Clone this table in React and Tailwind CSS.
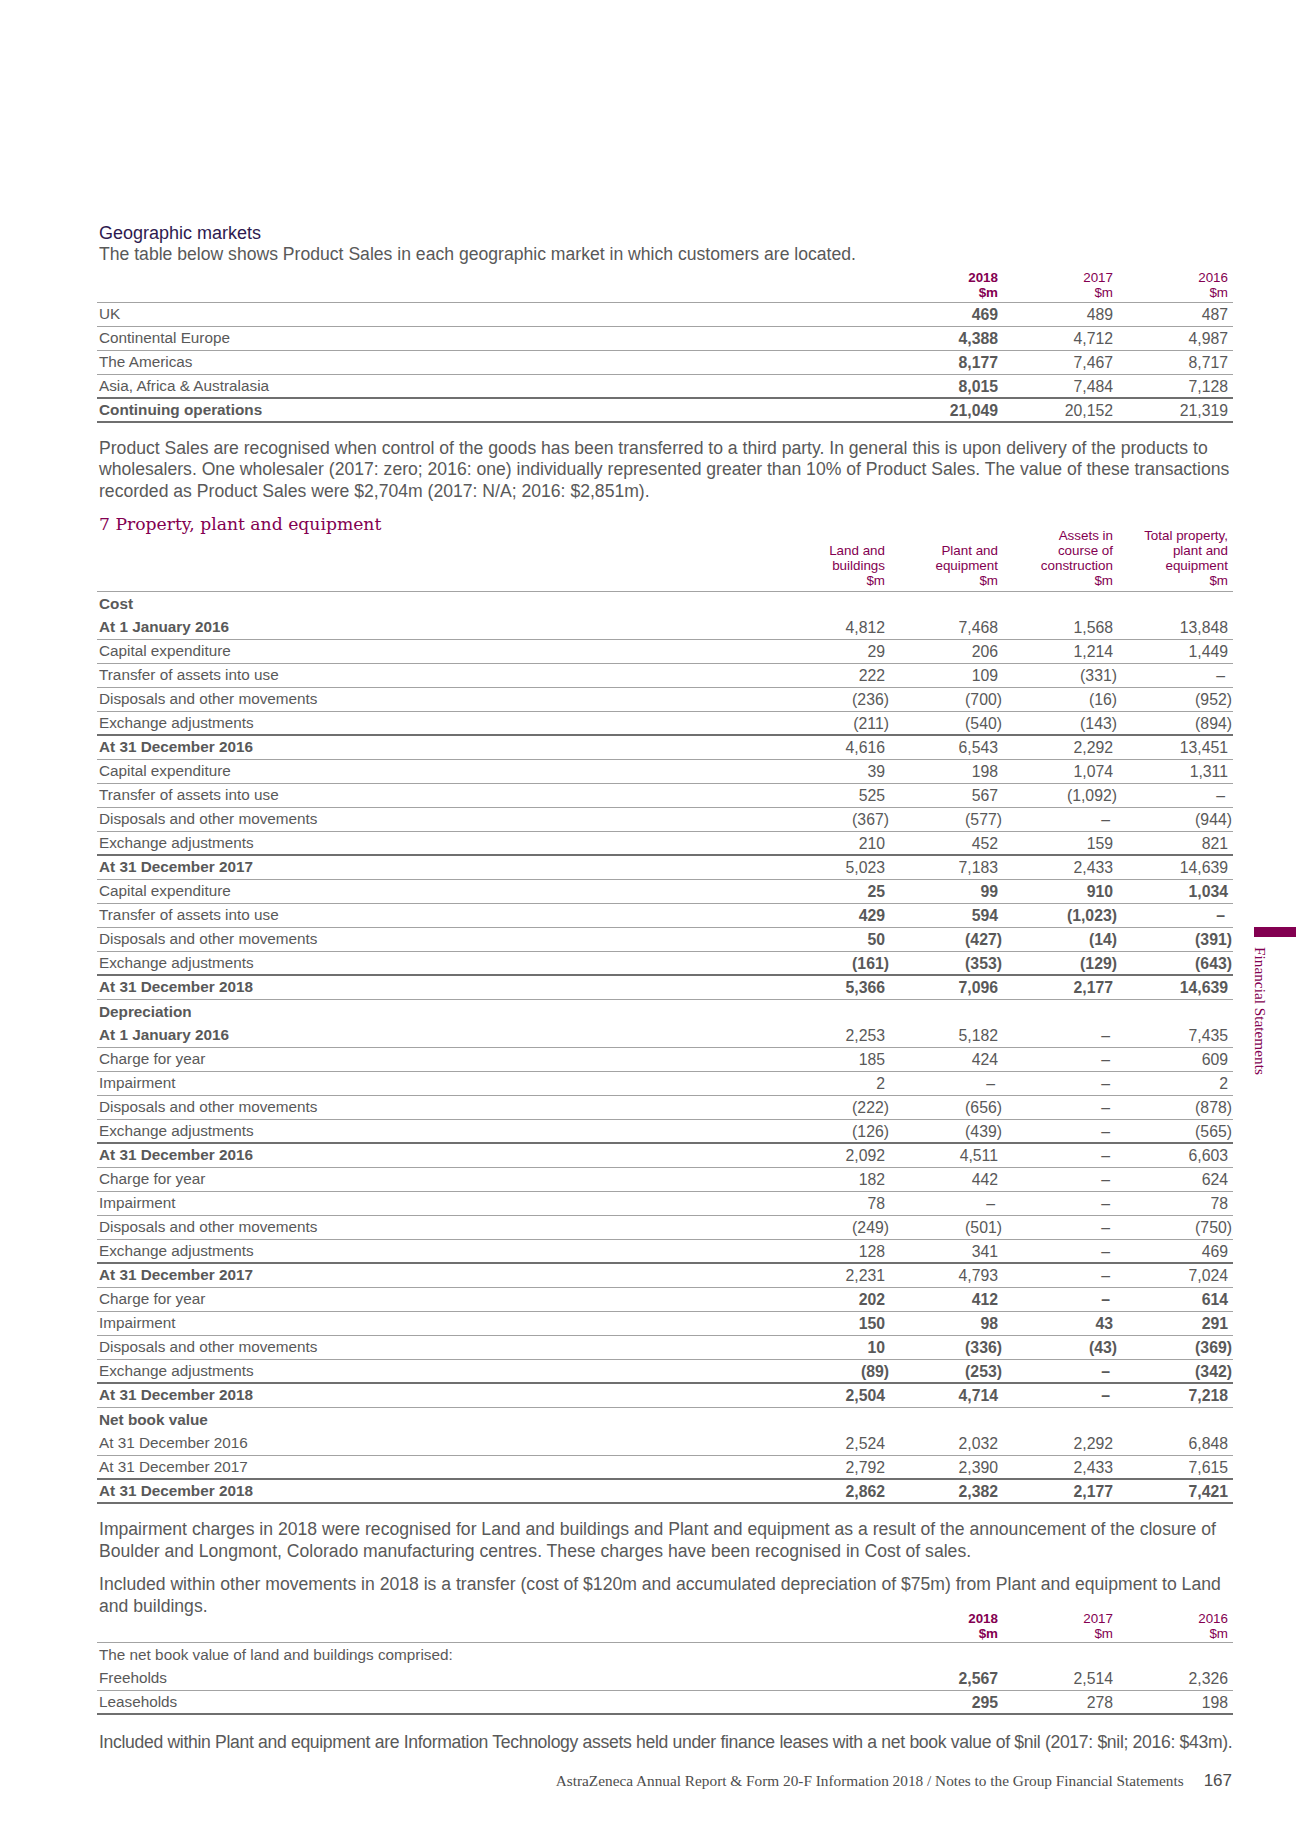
import React from "react";

const geoRows = [
    { label: "UK", vals: ["469", "489", "487"] },
    { label: "Continental Europe", vals: ["4,388", "4,712", "4,987"] },
    { label: "The Americas", vals: ["8,177", "7,467", "8,717"] },
    { label: "Asia, Africa & Australasia", vals: ["8,015", "7,484", "7,128"], line: "thick" },
    { label: "Continuing operations", vals: ["21,049", "20,152", "21,319"], boldLabel: true, line: "thick" },
];

// line: none | thin | thick ; bl = bold label ; bv = bold values
const ppeRows = [
    { label: "Cost", bl: true, line: "none" },
    { label: "At 1 January 2016", bl: true, vals: ["4,812", "7,468", "1,568", "13,848"] },
    { label: "Capital expenditure", vals: ["29", "206", "1,214", "1,449"] },
    { label: "Transfer of assets into use", vals: ["222", "109", "(331)", "–"] },
    { label: "Disposals and other movements", vals: ["(236)", "(700)", "(16)", "(952)"] },
    { label: "Exchange adjustments", vals: ["(211)", "(540)", "(143)", "(894)"], line: "thick" },
    { label: "At 31 December 2016", bl: true, vals: ["4,616", "6,543", "2,292", "13,451"] },
    { label: "Capital expenditure", vals: ["39", "198", "1,074", "1,311"] },
    { label: "Transfer of assets into use", vals: ["525", "567", "(1,092)", "–"] },
    { label: "Disposals and other movements", vals: ["(367)", "(577)", "–", "(944)"] },
    { label: "Exchange adjustments", vals: ["210", "452", "159", "821"], line: "thick" },
    { label: "At 31 December 2017", bl: true, vals: ["5,023", "7,183", "2,433", "14,639"] },
    { label: "Capital expenditure", bv: true, vals: ["25", "99", "910", "1,034"] },
    { label: "Transfer of assets into use", bv: true, vals: ["429", "594", "(1,023)", "–"] },
    { label: "Disposals and other movements", bv: true, vals: ["50", "(427)", "(14)", "(391)"] },
    { label: "Exchange adjustments", bv: true, vals: ["(161)", "(353)", "(129)", "(643)"], line: "thick" },
    { label: "At 31 December 2018", bl: true, bv: true, vals: ["5,366", "7,096", "2,177", "14,639"] },
    { label: "Depreciation", bl: true, line: "none" },
    { label: "At 1 January 2016", bl: true, vals: ["2,253", "5,182", "–", "7,435"] },
    { label: "Charge for year", vals: ["185", "424", "–", "609"] },
    { label: "Impairment", vals: ["2", "–", "–", "2"] },
    { label: "Disposals and other movements", vals: ["(222)", "(656)", "–", "(878)"] },
    { label: "Exchange adjustments", vals: ["(126)", "(439)", "–", "(565)"], line: "thick" },
    { label: "At 31 December 2016", bl: true, vals: ["2,092", "4,511", "–", "6,603"] },
    { label: "Charge for year", vals: ["182", "442", "–", "624"] },
    { label: "Impairment", vals: ["78", "–", "–", "78"] },
    { label: "Disposals and other movements", vals: ["(249)", "(501)", "–", "(750)"] },
    { label: "Exchange adjustments", vals: ["128", "341", "–", "469"], line: "thick" },
    { label: "At 31 December 2017", bl: true, vals: ["2,231", "4,793", "–", "7,024"] },
    { label: "Charge for year", bv: true, vals: ["202", "412", "–", "614"] },
    { label: "Impairment", bv: true, vals: ["150", "98", "43", "291"] },
    { label: "Disposals and other movements", bv: true, vals: ["10", "(336)", "(43)", "(369)"] },
    { label: "Exchange adjustments", bv: true, vals: ["(89)", "(253)", "–", "(342)"], line: "thick" },
    { label: "At 31 December 2018", bl: true, bv: true, vals: ["2,504", "4,714", "–", "7,218"] },
    { label: "Net book value", bl: true, line: "none" },
    { label: "At 31 December 2016", vals: ["2,524", "2,032", "2,292", "6,848"] },
    { label: "At 31 December 2017", vals: ["2,792", "2,390", "2,433", "7,615"], line: "thick" },
    { label: "At 31 December 2018", bl: true, bv: true, vals: ["2,862", "2,382", "2,177", "7,421"], line: "thick" },
];

function lineClass(line) {
    if (line === "none") return "";
    if (line === "thick") return "border-b-2 border-[#6f6f6f]";
    return "border-b border-[#a3a3a3]";
}

function Num({ v }) {
    if (v === "–") return <span className="mr-[3px]">–</span>;
    if (v.startsWith("(")) {
        return (
            <span>
                {v.slice(0, -1)}
                <span className="-mr-[4px]">)</span>
            </span>
        );
    }
    return <span>{v}</span>;
}

function Paragraph({ children, className = "" }) {
    return <p className={"text-[17.6px] leading-[21.5px] " + className}>{children}</p>;
}

export default function App() {
    return (
        <div className="min-h-[1832px] bg-white flex font-['Liberation_Sans',Arial,sans-serif] text-[#595959]">
            <div className="ml-[97px] w-[1136px] pt-[223px] shrink-0">
                {/* Geographic markets */}
                <div className="pl-[2px] leading-[21px]">
                    <h3 className="text-[18px] text-[#2e1a4f]">Geographic markets</h3>
                    <p className="text-[17.6px]">The table below shows Product Sales in each geographic market in which customers are located.</p>
                </div>

                <div className="mt-[4.5px]">
                    <div className="grid grid-cols-[1fr_113px_115px_115px] text-[13.4px] leading-[15px] text-[#830051] pb-[2px] border-b border-[#a3a3a3]">
                        <div />
                        <div className="text-right pr-[5px] font-bold">2018<br />$m</div>
                        <div className="text-right pr-[5px]">2017<br />$m</div>
                        <div className="text-right pr-[5px]">2016<br />$m</div>
                    </div>
                    {geoRows.map((r, i) => (
                        <div key={i} className={"grid grid-cols-[1fr_113px_115px_115px] h-[24px] items-center text-[15.3px] " + lineClass(r.line)}>
                            <div className={"pl-[2px] " + (r.boldLabel ? "font-bold" : "")}>{r.label}</div>
                            <div className="text-right pr-[5px] font-bold text-[15.8px]">{r.vals[0]}</div>
                            <div className="text-right pr-[5px] text-[15.8px]">{r.vals[1]}</div>
                            <div className="text-right pr-[5px] text-[15.8px]">{r.vals[2]}</div>
                        </div>
                    ))}
                </div>

                <Paragraph className="mt-[15px] pl-[2px]">
                    Product Sales are recognised when control of the goods has been transferred to a third party. In general this is upon delivery of the products to wholesalers. One wholesaler (2017: zero; 2016: one) individually represented greater than 10% of Product Sales. The value of these transactions recorded as Product Sales were $2,704m (2017: N/A; 2016: $2,851m).
                </Paragraph>

                {/* 7 Property, plant and equipment */}
                <h2 className="mt-[10px] pl-[2px] font-['DejaVu_Serif',serif] text-[17.2px] leading-[24px] text-[#830051]">
                    7 Property, plant and equipment
                </h2>

                <div className="-mt-[8px]">
                    <div className="grid grid-cols-[1fr_113px_113px_115px_115px] items-end text-[13.4px] leading-[15px] text-[#830051] pb-[3px] border-b border-[#a3a3a3]">
                        <div />
                        <div className="text-right pr-[5px]">Land and<br />buildings<br />$m</div>
                        <div className="text-right pr-[5px]">Plant and<br />equipment<br />$m</div>
                        <div className="text-right pr-[5px]">Assets in<br />course of<br />construction<br />$m</div>
                        <div className="text-right pr-[5px]">Total property,<br />plant and<br />equipment<br />$m</div>
                    </div>
                    {ppeRows.map((r, i) => (
                        <div key={i} className={"grid grid-cols-[1fr_113px_113px_115px_115px] h-[24px] items-center text-[15.3px] " + lineClass(r.line)}>
                            <div className={"pl-[2px] " + (r.bl ? "font-bold" : "")}>{r.label}</div>
                            {(r.vals || ["", "", "", ""]).map((v, j) => (
                                <div key={j} className={"text-right pr-[5px] text-[15.8px] " + (r.bv ? "font-bold" : "")}>
                                    {v && <Num v={v} />}
                                </div>
                            ))}
                        </div>
                    ))}
                </div>

                <Paragraph className="mt-[15px] pl-[2px]">
                    Impairment charges in 2018 were recognised for Land and buildings and Plant and equipment as a result of the announcement of the closure of Boulder and Longmont, Colorado manufacturing centres. These charges have been recognised in Cost of sales.
                </Paragraph>
                <Paragraph className="mt-[12px] pl-[2px]">
                    Included within other movements in 2018 is a transfer (cost of $120m and accumulated depreciation of $75m) from Plant and equipment to Land and buildings.
                </Paragraph>

                <div className="-mt-[6.5px]">
                    <div className="grid grid-cols-[1fr_113px_115px_115px] text-[13.4px] leading-[15px] text-[#830051] pb-[1.5px] border-b border-[#a3a3a3]">
                        <div />
                        <div className="text-right pr-[5px] font-bold">2018<br />$m</div>
                        <div className="text-right pr-[5px]">2017<br />$m</div>
                        <div className="text-right pr-[5px]">2016<br />$m</div>
                    </div>
                    <div className="h-[24px] flex items-center pl-[2px] text-[15.3px]">
                        The net book value of land and buildings comprised:
                    </div>
                    <div className="grid grid-cols-[1fr_113px_115px_115px] h-[24px] items-center text-[15.3px] border-b border-[#a3a3a3]">
                        <div className="pl-[2px]">Freeholds</div>
                        <div className="text-right pr-[5px] font-bold text-[15.8px]">2,567</div>
                        <div className="text-right pr-[5px] text-[15.8px]">2,514</div>
                        <div className="text-right pr-[5px] text-[15.8px]">2,326</div>
                    </div>
                    <div className="grid grid-cols-[1fr_113px_115px_115px] h-[24px] items-center text-[15.3px] border-b-2 border-[#6f6f6f]">
                        <div className="pl-[2px]">Leaseholds</div>
                        <div className="text-right pr-[5px] font-bold text-[15.8px]">295</div>
                        <div className="text-right pr-[5px] text-[15.8px]">278</div>
                        <div className="text-right pr-[5px] text-[15.8px]">198</div>
                    </div>
                </div>

                <Paragraph className="mt-[17px] pl-[2px] whitespace-nowrap tracking-[-0.33px]">
                    Included within Plant and equipment are Information Technology assets held under finance leases with a net book value of $nil (2017: $nil; 2016: $43m).
                </Paragraph>

                <div className="mt-[17px] flex justify-end items-baseline gap-[20px] pr-[1px] text-[#4d4d4d]">
                    <span className="font-['Liberation_Serif',serif] text-[15.3px] leading-[20px]">
                        AstraZeneca Annual Report &amp; Form 20-F Information 2018 / Notes to the Group Financial Statements
                    </span>
                    <span className="text-[17px] leading-[20px]">167</span>
                </div>
            </div>

            {/* side tab */}
            <div className="flex-1 pt-[927px] flex flex-col">
                <div className="self-end h-[10px] w-[42px] bg-[#830051]" />
                <div className="self-start mt-[10px] ml-[19px] [writing-mode:vertical-rl] font-['Liberation_Serif',serif] text-[15.3px] leading-[17px] text-[#830051]">
                    Financial Statements
                </div>
            </div>
        </div>
    );
}
